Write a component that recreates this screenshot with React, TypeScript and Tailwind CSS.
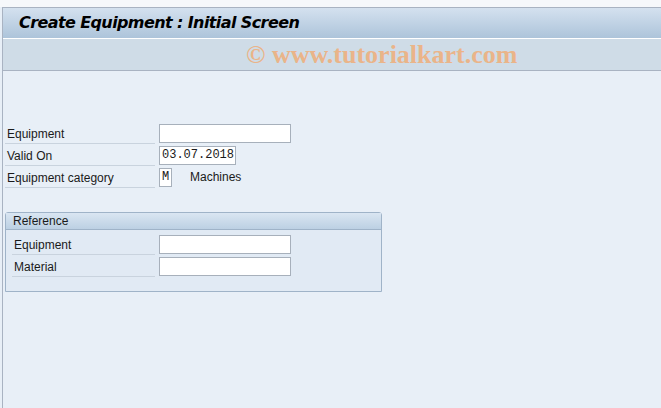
const labelFont = { fontFamily: '"Liberation Sans", Arial, sans-serif' };

function Field({
  label,
  width,
  value,
  mono,
  indent,
  extra,
}: {
  label: string;
  width: string;
  value?: string;
  mono?: boolean;
  indent?: boolean;
  extra?: string;
}) {
  return (
    <div className="flex h-[22px] items-center">
      <div className={`flex h-full items-center border-b border-[#c9d3de] pt-[3px] ${indent ? "w-[143px] pl-[2px]" : "w-[150px] pl-[2px]"} text-[12px] text-[#1a1a1a]`}>
        {label}
      </div>
      <div className={`ml-[4px] h-[19px] ${width} border border-[#a7b0bb] bg-white px-[2px] text-[12px] leading-[17px] text-[#1a1a1a]`}
        style={mono ? { fontFamily: '"Liberation Mono", "Courier New", monospace' } : undefined}>
        {value}
      </div>
      {extra && <div className="ml-[18px] text-[12px] text-[#1a1a1a]">{extra}</div>}
    </div>
  );
}

export default function App() {
  return (
    <div className="h-[408px] w-[661px] overflow-hidden bg-[#e8eff7]" style={labelFont}>
      <div className="h-[7px] bg-[#f6f8fb]" />
      <div className="ml-[2px] border-t border-l border-[#a9b3c2]">
        <div className="flex h-[30px] items-center bg-gradient-to-b from-[#d4e1ef] to-[#adc4da] pl-[16px]">
          <span className="text-[16px] font-bold italic text-black" style={{ fontFamily: 'Verdana, "DejaVu Sans", sans-serif', letterSpacing: "-0.6px" }}>
            Create Equipment : Initial Screen
          </span>
        </div>
        <div className="flex h-[33px] items-center border-t border-white border-b border-b-[#a9b3c2] bg-[#cfdce7] pl-[243px]">
          <span className="text-[26px] font-bold leading-none text-[#eab489]" style={{ fontFamily: '"Liberation Serif", "Times New Roman", serif' }}>
            © www.tutorialkart.com
          </span>
        </div>
        <div className="h-[340px] pl-[2px] pt-[51px]">
          <Field label="Equipment" width="w-[132px]" />
          <Field label="Valid On" width="w-[77px]" value="03.07.2018" mono />
          <Field label="Equipment category" width="w-[13px]" value="M" mono extra="Machines" />

          <div className="mt-[24px] w-[377px] rounded-t-[3px] border border-[#9fb3c8]">
            <div className="flex h-[17px] items-center border-b border-[#9fb3c8] bg-gradient-to-b from-[#dae6f2] to-[#bcd0e3] pl-[7px] text-[12px] text-[#1a1a1a]">
              Reference
            </div>
            <div className="bg-[#e1eaf4] pb-[14px] pl-[6px] pt-[3px]">
              <Field label="Equipment" width="w-[132px]" indent />
              <Field label="Material" width="w-[132px]" indent />
            </div>
          </div>
        </div>
      </div>
    </div>
  );
}
